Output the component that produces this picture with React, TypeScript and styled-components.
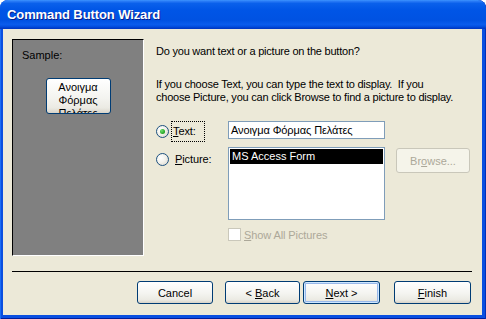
import React from 'react';
import styled, { createGlobalStyle } from 'styled-components';

const GlobalStyle = createGlobalStyle`
  html, body {
    margin: 0;
    padding: 0;
    background: #ffffff;
  }
  body {
    font-family: "Liberation Sans", Arial, sans-serif;
    font-size: 11px;
    color: #000;
  }
`;

const Window = styled.div`
  width: 486px;
  height: 319px;
  display: flex;
  flex-direction: column;
  background: #0a4fe0;
  border-radius: 8px 8px 0 0;
  overflow: hidden;
  box-shadow:
    inset 1px 0 0 0 #1a6cf5,
    inset -1px 0 0 0 #0030b8,
    inset 0 -1px 0 0 #001d9c;
`;

const TitleBar = styled.div`
  height: 29px;
  flex: none;
  display: flex;
  align-items: center;
  padding-left: 7px;
  background: linear-gradient(
    to bottom,
    #3d95ff 0%,
    #2b7cf7 4%,
    #0a60eb 12%,
    #0055e6 35%,
    #0052e2 70%,
    #0a5cec 84%,
    #0453e4 90%,
    #003cc8 97%,
    #0036c0 100%
  );
  border-radius: 8px 8px 0 0;
`;

const Title = styled.span`
  font-family: "Liberation Sans", Arial, sans-serif;
  font-weight: bold;
  font-size: 13px;
  color: #fff;
  text-shadow: 1px 1px 0 #0a1e8a;
  letter-spacing: -0.1px;
`;

const Client = styled.div`
  flex: 1;
  margin: 0 4px 4px 3px;
  background: #ece9d8;
  display: flex;
  flex-direction: column;
  padding: 10px 10px 0 9px;
`;

const Body = styled.div`
  height: 217px;
  display: flex;
`;

const SamplePanel = styled.div`
  width: 130px;
  height: 215px;
  flex: none;
  background: #808080;
  border-top: 1px solid #000;
  border-left: 1px solid #000;
  border-right: 1px solid #fff;
  border-bottom: 1px solid #fff;
  display: flex;
  flex-direction: column;
`;

const SampleLabel = styled.div`
  margin: 9px 0 0 9px;
  line-height: 13px;
`;

// the third line is clipped by the button, as in the wizard
const SampleButton = styled.div`
  align-self: center;
  margin-top: 16px;
  width: 63px;
  height: 32px;
  padding-top: 2px;
  border: 1px solid #003c74;
  border-radius: 3px;
  background: linear-gradient(to bottom, #fff 0%, #f4f4f0 55%, #ebeae3 85%, #d8d3c8 100%);
  overflow: hidden;
  text-align: center;
  line-height: 13px;
`;

const Content = styled.div`
  flex: 1;
  margin-left: 12px;
  padding-top: 6px;
  display: flex;
  flex-direction: column;
`;

const Para = styled.p<{ $gap?: number }>`
  margin: ${(p) => p.$gap ?? 0}px 0 0 0;
  line-height: 13px;
  letter-spacing: -0.22px;
  white-space: nowrap;
`;

const Options = styled.div`
  margin-top: 17px;
  display: grid;
  grid-template-columns: 72px 157px auto;
  grid-template-rows: 21px 73px 13px;
  row-gap: 5px;
  align-items: start;
`;

const OptionCell = styled.div<{ $pad?: number }>`
  display: flex;
  align-items: center;
  padding-top: ${(p) => p.$pad ?? 0}px;
  height: ${(p) => (p.$pad ? 13 : 21)}px;
`;

const Radio = styled.span<{ $checked?: boolean }>`
  width: 11px;
  height: 11px;
  flex: none;
  border: 1px solid #1c5180;
  border-radius: 50%;
  background: radial-gradient(circle at 35% 35%, #ffffff 0%, #f3f2ec 45%, #d6d3c8 100%);
  display: flex;
  align-items: center;
  justify-content: center;
  &::after {
    content: '';
    display: ${(p) => (p.$checked ? 'block' : 'none')};
    width: 5px;
    height: 5px;
    border-radius: 50%;
    background: radial-gradient(circle at 35% 35%, #6ee06e 0%, #21a121 70%, #1a801a 100%);
  }
`;

const OptionLabel = styled.span<{ $focused?: boolean }>`
  margin-left: ${(p) => (p.$focused ? 2 : 5)}px;
  padding: 0 ${(p) => (p.$focused ? 8 : 0)}px 0 1px;
  height: ${(p) => (p.$focused ? 19 : 13)}px;
  line-height: ${(p) => (p.$focused ? 19 : 13)}px;
  border: ${(p) => (p.$focused ? '1px dotted #000' : 'none')};
  letter-spacing: -0.1px;
`;

const Key = styled.u`
  text-decoration: underline;
  text-underline-offset: 1px;
`;

const TextBox = styled.div`
  width: 157px;
  height: 18px;
  box-sizing: border-box;
  border: 1px solid #7f9db9;
  background: #fff;
  line-height: 16px;
  padding-left: 2px;
  letter-spacing: -0.1px;
`;

const ListBox = styled.div`
  width: 157px;
  height: 73px;
  box-sizing: border-box;
  border: 1px solid #7f9db9;
  background: #fff;
  padding: 1px;
`;

const ListItem = styled.div<{ $selected?: boolean }>`
  height: 15px;
  line-height: 15px;
  padding-left: 2px;
  background: ${(p) => (p.$selected ? '#000' : 'transparent')};
  color: ${(p) => (p.$selected ? '#fff' : '#000')};
`;

const XpButton = styled.div<{ $disabled?: boolean; $default?: boolean; $w?: number; $h?: number }>`
  width: ${(p) => p.$w ?? 76}px;
  height: ${(p) => p.$h ?? 23}px;
  box-sizing: border-box;
  flex: none;
  display: flex;
  align-items: center;
  justify-content: center;
  border: 1px solid ${(p) => (p.$disabled ? '#c9c7ba' : '#003c74')};
  border-radius: 3px;
  color: ${(p) => (p.$disabled ? '#aca899' : '#000')};
  background: ${(p) =>
    p.$disabled
      ? '#f5f4ea'
      : 'linear-gradient(to bottom, #ffffff 0%, #f4f4f0 55%, #ebeae3 85%, #d8d3c8 100%)'};
  box-shadow: ${(p) =>
    p.$default ? 'inset 0 0 0 1px #cee7ff, inset 0 0 0 2px #98b8ea' : 'none'};
`;

const BrowseButton = styled(XpButton)`
  margin: 1px 0 0 11px;
`;

const CheckCell = styled.div`
  grid-column: 2 / 4;
  display: flex;
  align-items: center;
  margin-top: 3px;
  color: #aca899;
`;

const CheckBox = styled.span`
  width: 11px;
  height: 11px;
  flex: none;
  border: 1px solid #cac8bb;
  background: #fff;
`;

const CheckLabel = styled.span`
  margin-left: 3px;
  letter-spacing: -0.1px;
`;

const Separator = styled.div`
  margin-top: 15px;
  height: 1px;
  background: #000;
`;

const ButtonRow = styled.div`
  margin-top: 9px;
  display: flex;
  justify-content: flex-end;
  padding-right: 1px;
`;

const Gap = styled.span<{ $w: number }>`
  width: ${(p) => p.$w}px;
  flex: none;
`;

export default function App() {
  return (
    <>
      <GlobalStyle />
      <Window>
        <TitleBar>
          <Title>Command Button Wizard</Title>
        </TitleBar>
        <Client>
          <Body>
            <SamplePanel>
              <SampleLabel>Sample:</SampleLabel>
              <SampleButton>Ανοιγμα Φόρμας Πελάτες</SampleButton>
            </SamplePanel>
            <Content>
              <Para>Do you want text or a picture on the button?</Para>
              <Para $gap={20}>
                If you choose Text, you can type the text to display.&nbsp; If you
                <br />
                choose Picture, you can click Browse to find a picture to display.
              </Para>
              <Options>
                <OptionCell>
                  <Radio $checked />
                  <OptionLabel $focused>
                    <Key>T</Key>ext:
                  </OptionLabel>
                </OptionCell>
                <TextBox>Ανοιγμα Φόρμας Πελάτες</TextBox>
                <span />
                <OptionCell $pad={6}>
                  <Radio />
                  <OptionLabel>
                    <Key>P</Key>icture:
                  </OptionLabel>
                </OptionCell>
                <ListBox>
                  <ListItem $selected>MS Access Form</ListItem>
                </ListBox>
                <BrowseButton $disabled $w={74} $h={25}>
                  <span>
                    Br<Key>o</Key>wse...
                  </span>
                </BrowseButton>
                <CheckCell>
                  <CheckBox />
                  <CheckLabel>
                    <Key>S</Key>how All Pictures
                  </CheckLabel>
                </CheckCell>
              </Options>
            </Content>
          </Body>
          <Separator />
          <ButtonRow>
            <XpButton>
              <span>Cancel</span>
            </XpButton>
            <Gap $w={12} />
            <XpButton $w={75}>
              <span>
                &lt; <Key>B</Key>ack
              </span>
            </XpButton>
            <Gap $w={3} />
            <XpButton $default $w={77}>
              <span>
                <Key>N</Key>ext &gt;
              </span>
            </XpButton>
            <Gap $w={14} />
            <XpButton $w={77}>
              <span>
                <Key>F</Key>inish
              </span>
            </XpButton>
          </ButtonRow>
        </Client>
      </Window>
    </>
  );
}
